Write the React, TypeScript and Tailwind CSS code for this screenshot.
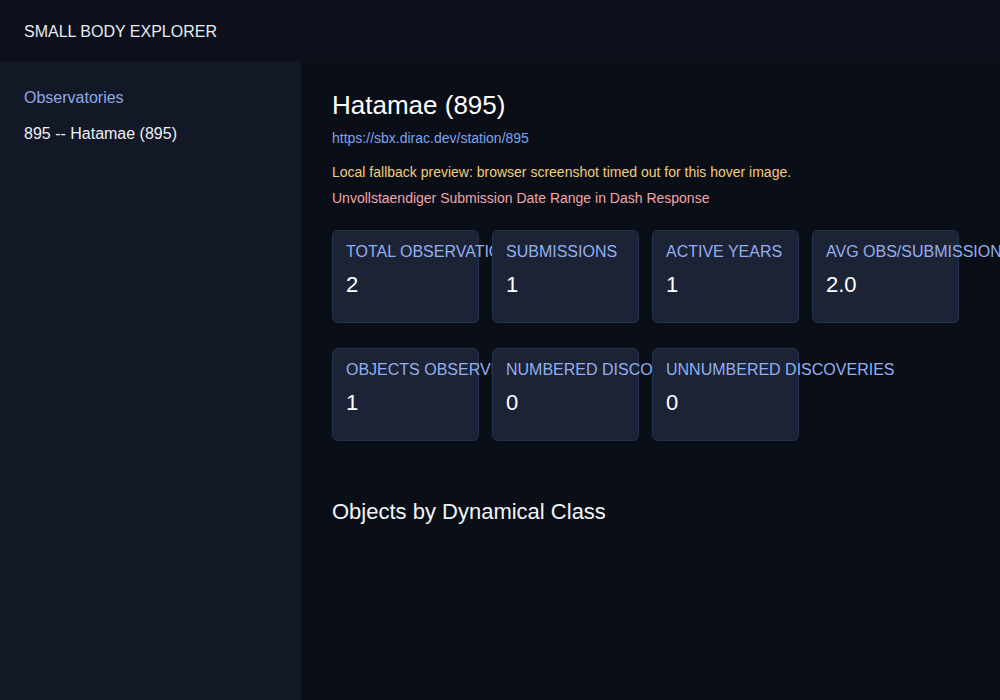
import React from "react";

const rowOne = [
  { label: "Total Observations", value: "2" },
  { label: "Submissions", value: "1" },
  { label: "Active Years", value: "1" },
  { label: "Avg Obs/Submission", value: "2.0" },
];

const rowTwo = [
  { label: "Objects Observed", value: "1" },
  { label: "Numbered Discoveries", value: "0" },
  { label: "Unnumbered Discoveries", value: "0" },
];

const StatCard: React.FC<{ label: string; value: string }> = ({ label, value }) => (
  <div className="w-[147px] h-[93px] shrink-0 rounded-[6px] border border-[#233250] bg-[#1b2334] px-[13px] pt-[11px]">
    <div className="text-[16px] leading-[20px] uppercase whitespace-nowrap text-[#94aef0]">{label}</div>
    <div className="mt-[10px] text-[22px] leading-[26px] text-white">{value}</div>
  </div>
);

export default function App() {
  return (
    <div className="w-full h-[700px] flex flex-col bg-[#0a0e17] font-['Liberation_Sans',Arial,sans-serif] overflow-hidden">
      <header className="h-[61px] shrink-0 flex items-center pt-[2px] px-6 bg-[#0b101b] text-[16px] text-[#e8ebf2]">
        SMALL BODY EXPLORER
      </header>
      <div className="flex flex-1 min-h-0">
        <aside className="w-[301px] shrink-0 bg-[#121826] px-6 pt-[27px]">
          <div className="text-[16px] leading-[20px] text-[#8fa8ea]">Observatories</div>
          <div className="mt-[16px] text-[16px] leading-[20px] text-[#eef0f5]">895 -- Hatamae (895)</div>
        </aside>
        <main className="flex-1 pl-[31px] pt-[29px] bg-[#0a0e17]">
          <h1 className="text-[26px] leading-[30px] text-white">Hatamae (895)</h1>
          <div className="mt-[9px] text-[14px] leading-[18px] text-[#7ea3ee]">https://sbx.dirac.dev/station/895</div>
          <div className="mt-[16px] text-[14px] leading-[18px] text-[#f2cd7c]">
            Local fallback preview: browser screenshot timed out for this hover image.
          </div>
          <div className="mt-[8px] text-[14px] leading-[18px] text-[#f1a5ad]">
            Unvollstaendiger Submission Date Range in Dash Response
          </div>
          <div className="mt-[23px] flex gap-[13px]">
            {rowOne.map((c) => (
              <StatCard key={c.label} label={c.label} value={c.value} />
            ))}
          </div>
          <div className="mt-[25px] flex gap-[13px]">
            {rowTwo.map((c) => (
              <StatCard key={c.label} label={c.label} value={c.value} />
            ))}
          </div>
          <h2 className="mt-[58px] text-[22px] leading-[26px] text-[#f2f4f8]">Objects by Dynamical Class</h2>
        </main>
      </div>
    </div>
  );
}
